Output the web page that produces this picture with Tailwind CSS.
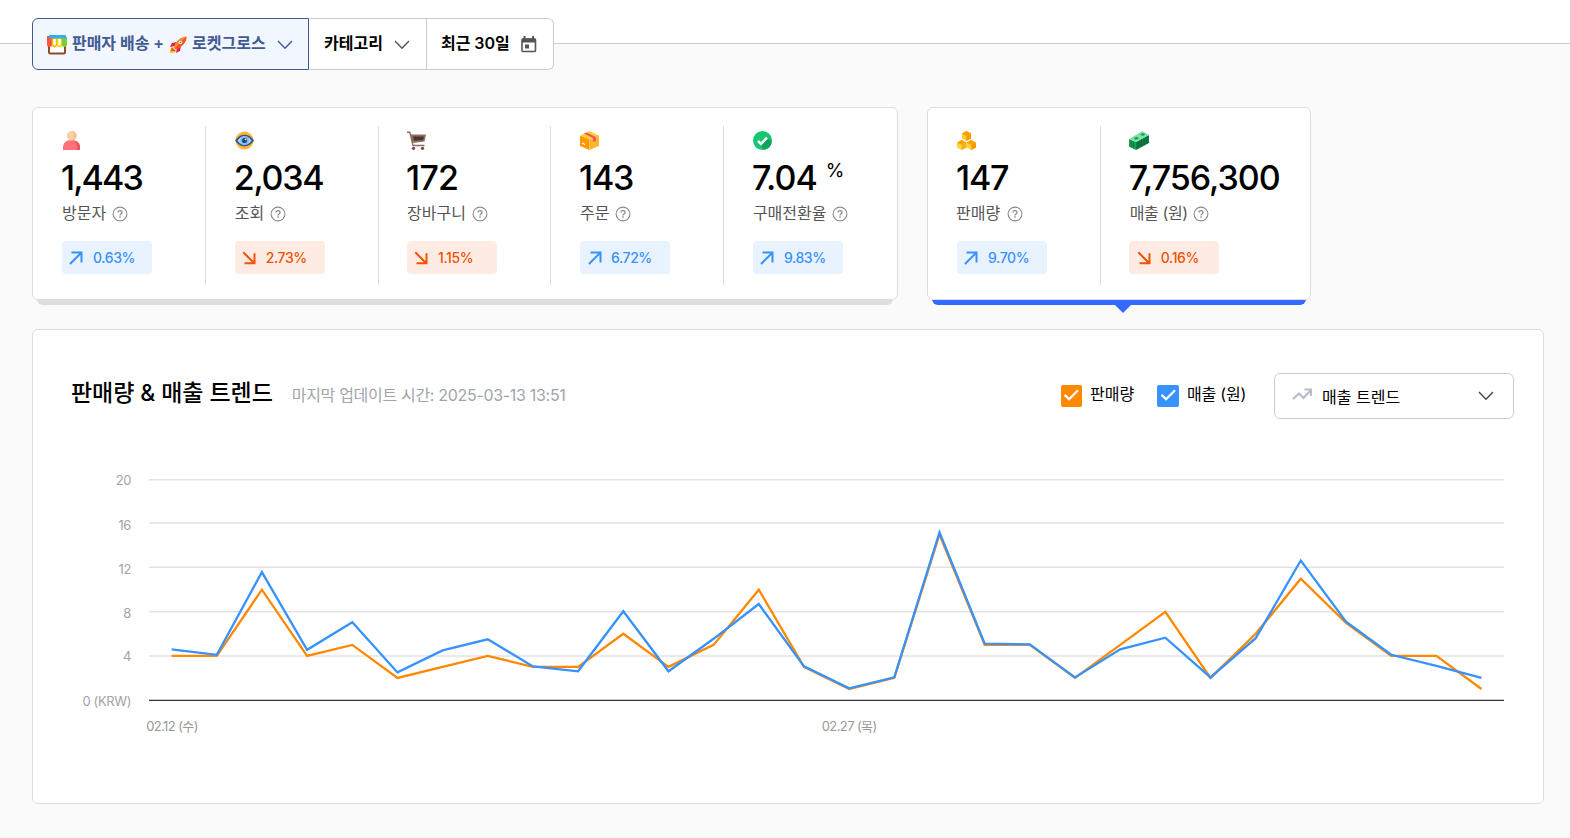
<!DOCTYPE html>
<html lang="ko">
    <head>
        <meta charset="UTF-8"/>
        <meta name="viewport" content="width=device-width, initial-scale=1"/>
        <title>판매 분석</title>
        <script src="https://cdn.jsdelivr.net/npm/@tailwindcss/browser@4"></script>
    </head>
    <body class="bg-[#fafafa] text-black font-['Inter','Noto_Sans_CJK_KR',sans-serif] h-[838px] overflow-hidden">
        <!-- Shared icons -->
        <svg class="hidden">
            <symbol id="chevron" viewBox="0 0 16 10">
                <path d="M1 1l7 7.2L15 1" fill="none" stroke="currentColor" stroke-width="1.4"/>
            </symbol>
            <symbol id="help" viewBox="0 0 16 16">
                <circle cx="8" cy="8" r="6.9" fill="none" stroke="#8c8c8c" stroke-width="1.1"/>
                <path d="M6 6.6C6 5.4 6.8 4.7 8 4.7s2 .7 2 1.8c0 1.4-2 1.5-2 3" fill="none" stroke="#8c8c8c" stroke-width="1.3"/>
                <rect x="7.3" y="10.3" width="1.4" height="1.5" fill="#8c8c8c"/>
            </symbol>
            <symbol id="up" viewBox="0 0 14 14">
                <path d="M1 13L12 2M2.5 1.5h10v10" fill="none" stroke="currentColor" stroke-width="2"/>
            </symbol>
            <symbol id="down" viewBox="0 0 14 14">
                <path d="M1.3 1.3L12 12M2.5 12.2h10v-10" fill="none" stroke="currentColor" stroke-width="2"/>
            </symbol>
        </svg>

        <!-- Filter bar -->
        <header class="h-11 bg-white border-b border-[#ccc] pl-8 pt-[18px]">
            <div class="relative flex w-[522px] h-[52px] bg-white rounded-md text-base font-semibold">
                <button class="flex items-center w-[277px] pl-[14px] border border-[#425a92] rounded-l-md bg-[#f1f6ff] text-[#425a92] whitespace-nowrap">
                    <svg class="w-5 h-5 mt-px mr-[5px]" viewBox="0 0 20 20">
                        <path d="M2 10v7Q2 18.500 3.500 18.500h13q1.500 0 1.500-1.500v-7" fill="#fff" stroke="#8d4b25" stroke-width="2"/>
                        <path d="M0 1h5v8.500a2.500 2.500 0 01-5 0z" fill="#ff5436"/>
                        <path d="M5.500 3v6.500a2 2 0 004 0V3z" fill="#fff" stroke="#ffb300" stroke-width="1.500"/>
                        <path d="M10.500 3v6.500a2 2 0 004 0V3z" fill="#fff" stroke="#f0d400" stroke-width="1.500"/>
                        <path d="M15 2h5v7.500a2.500 2.500 0 01-5 0z" fill="#7ccc35"/>
                        <path d="M2 0h16.500L20 3.500H2z" fill="#2cb2e8"/>
                    </svg>
                    <span class="-mt-0.5 tracking-[-0.05px]">판매자 배송 +</span>
                    <svg class="w-[18px] h-[18px] mt-px ml-[5px] mr-[5px]" viewBox="0 0 18 18">
                        <path d="M1 17l1-6 5 5z" fill="#ffb300"/>
                        <path d="M2 15l1-4 4 4z" fill="#f4511e"/>
                        <path d="M8 6L3 7 1 11l5-1zM12 10l-1 5-4 2 1-5z" fill="#e01e4f"/>
                        <path d="M17.500.5C12 .5 8 4 4.500 11L7 13.500C14 10 17.500 6 17.500.5z" fill="#ff8a1e"/>
                        <path d="M17.500.5C17.500 6 14 10 7 13.500L5.800 12.200z" fill="#f4511e"/>
                        <circle cx="11.500" cy="6.500" r="1.800" fill="#fff"/>
                        <circle cx="11.500" cy="6.500" r="1.100" fill="#38a8ed"/>
                    </svg>
                    <span class="-mt-0.5">로켓그로스</span>
                    <svg class="w-4 h-[10px] ml-[11px] mt-0.5"><use href="#chevron"/></svg>
                </button>
                <button class="flex items-center w-[118px] pl-[15px] border-y border-r border-[#ccc] whitespace-nowrap">
                    <span class="-mt-0.5">카테고리</span>
                    <svg class="w-4 h-[10px] ml-[11px] mt-0.5 text-[#555]"><use href="#chevron"/></svg>
                </button>
                <button class="flex items-center w-[127px] pl-[14px] border-y border-r border-[#ccc] rounded-r-md whitespace-nowrap">
                    <span class="-mt-0.5 tracking-[-0.05px]">최근 30일</span>
                    <svg class="w-4 h-[17px] ml-[11px]" viewBox="0 0 16 17">
                        <path d="M3.500 0v3M12 0v3" stroke="#555" stroke-width="2"/>
                        <rect x="1" y="3" width="13.500" height="12.500" rx="1" fill="none" stroke="#555" stroke-width="1.600"/>
                        <path d="M1 2.500h13.500v4H1z" fill="#555"/>
                        <rect x="4" y="8.500" width="4" height="4" fill="#555"/>
                    </svg>
                </button>
            </div>
        </header>

        <main class="pl-8 pt-[63px]">
            <!-- Metric cards -->
            <section class="flex gap-[29px]">
                <div class="relative">
                    <div class="absolute left-[5px] right-[5px] bottom-[-5px] h-3 bg-[#ddd] rounded-b-md"></div>
                    <div class="relative flex w-[866px] h-[193px] pt-[18px] bg-white border border-[#ddd] rounded-md">
                        <div class="w-[172.800px] h-[159px] pl-[29px] pt-[5px] border-r border-[#ddd]">
                            <svg class="w-[19px] h-[19px]" viewBox="0 0 19 19">
                                <path d="M1 19v-2.500C1 12 4 9 9.500 9S18 12 18 16.500V19z" fill="#ff7078"/>
                                <path d="M12 9.400c4 .8 6 3.400 6 7.100V19h-3v-3c0-3-1-5-3-6.600z" fill="#ee525d"/>
                                <circle cx="9.500" cy="4.700" r="4.700" fill="#ffd0a1"/>
                                <path d="M10 0a4.700 4.700 0 010 9.400c2.500-3 2.500-6.500 0-9.400z" fill="#ffbd86"/>
                            </svg>
                            <div class="-ml-px mt-2 text-[34px] leading-10 font-medium tracking-[-1.9px]">1,443</div>
                            <div class="mt-1 flex items-center h-[22px] text-base text-[#555]"><span>방문자</span><svg class="w-4 h-4 ml-1.5 mt-0.5"><use href="#help"/></svg></div>
                            <div class="mt-[17px] flex items-center w-[90px] h-[33px] pl-[7px] rounded bg-[#e8f3ff] text-sm font-medium text-[#3990ff] tracking-[-0.4px]"><svg class="w-3.5 h-3.5 mr-2.5"><use href="#up"/></svg>0.63%</div>
                        </div>
                        <div class="w-[172.800px] h-[159px] pl-[29px] pt-[5px] border-r border-[#ddd]">
                            <svg class="w-[19px] h-[19px]" viewBox="0 0 19 19">
                                <circle cx="9.500" cy="9.500" r="9" fill="#ffb52e"/>
                                <path d="M0 9.500C4 4.500 6.500 3.800 9.500 3.800S15 4.500 19 9.500c-4 5-6.500 5.700-9.500 5.700S4 14.500 0 9.500z" fill="#36528b"/>
                                <path d="M2.500 9.500C5 6 7 5.200 9.500 5.200S14 6 16.500 9.500C14 13 12 13.800 9.500 13.800S5 13 2.500 9.500z" fill="#b8dcff"/>
                                <circle cx="9.500" cy="9.500" r="4.600" fill="#7fbdf5"/>
                                <circle cx="9.500" cy="9.500" r="2.500" fill="#253f76"/>
                                <circle cx="10.500" cy="8.500" r=".8" fill="#fff"/>
                            </svg>
                            <div class="-ml-px mt-2 text-[34px] leading-10 font-medium tracking-[-1.3px]">2,034</div>
                            <div class="mt-1 flex items-center h-[22px] text-base text-[#555]"><span>조회</span><svg class="w-4 h-4 ml-1.5 mt-0.5"><use href="#help"/></svg></div>
                            <div class="mt-[17px] flex items-center w-[90px] h-[33px] pl-[7px] rounded bg-[#feece4] text-sm font-medium text-[#f25100] tracking-[-0.4px]"><svg class="w-3.5 h-3.5 mr-2.5"><use href="#down"/></svg>2.73%</div>
                        </div>
                        <div class="w-[172.800px] h-[159px] pl-[28.500px] pt-[5px] border-r border-[#ddd]">
                            <svg class="w-[19px] h-[19px]" viewBox="0 0 19 19">
                                <path d="M0 1.200h2.800L6 14.500h11.500" fill="none" stroke="#8d6e63" stroke-width="1.400"/>
                                <path d="M3.600 3.500H19l-1.500 7L5.300 12z" fill="#8d6e63"/>
                                <path d="M6 5.500h11l-.8 3.600-9.200.6z" fill="#4e342e"/>
                                <circle cx="6.500" cy="17.300" r="1.600" fill="#6d4c41"/>
                                <circle cx="15.500" cy="17.300" r="1.600" fill="#6d4c41"/>
                            </svg>
                            <div class="-ml-px mt-2 text-[34px] leading-10 font-medium tracking-[-0.8px]">172</div>
                            <div class="mt-1 flex items-center h-[22px] text-base text-[#555]"><span>장바구니</span><svg class="w-4 h-4 ml-1.5 mt-0.5"><use href="#help"/></svg></div>
                            <div class="mt-[17px] flex items-center w-[90px] h-[33px] pl-[7px] rounded bg-[#feece4] text-sm font-medium text-[#f25100] tracking-[-0.4px]"><svg class="w-3.5 h-3.5 mr-2.5"><use href="#down"/></svg>1.15%</div>
                        </div>
                        <div class="w-[172.800px] h-[159px] pl-[28.600px] pt-[5px] border-r border-[#ddd]">
                            <svg class="w-[19px] h-[19px]" viewBox="0 0 19 19">
                                <path d="M0 4.500L9.500 8v11L0 15z" fill="#ff9800"/>
                                <path d="M19 4.500L9.500 8v11l9.500-4z" fill="#ffb62e"/>
                                <path d="M0 4.500L9.500 0 19 4.500 9.500 8.500z" fill="#ffd13f"/>
                                <path d="M4 2.600L6.500 1.400 16 5.900V10l-2.700 1V7.200z" fill="#f3535c"/>
                                <path d="M2 12l3 1.500" stroke="#fff" stroke-width="1.200"/>
                            </svg>
                            <div class="-ml-px mt-2 text-[34px] leading-10 font-medium tracking-[-1.2px]">143</div>
                            <div class="mt-1 flex items-center h-[22px] text-base text-[#555]"><span>주문</span><svg class="w-4 h-4 ml-1.5 mt-0.5"><use href="#help"/></svg></div>
                            <div class="mt-[17px] flex items-center w-[90px] h-[33px] pl-2 rounded bg-[#e8f3ff] text-sm font-medium text-[#3990ff] tracking-[-0.4px]"><svg class="w-3.5 h-3.5 mr-[9px]"><use href="#up"/></svg>6.72%</div>
                        </div>
                        <div class="w-[172.800px] h-[159px] pl-[28.700px] pt-[5px]">
                            <svg class="w-[19px] h-[19px]" viewBox="0 0 19 19">
                                <circle cx="9.500" cy="9.500" r="9.500" fill="#17c671"/>
                                <path d="M14.500 6.500l4.200 4.200a9.500 9.500 0 01-7.500 8L6 12.500z" fill="#10a35b"/>
                                <path d="M5 9.800l3 3L14 6.700" fill="none" stroke="#fff" stroke-width="2.600"/>
                            </svg>
                            <div class="-ml-px flex mt-2 text-[34px] leading-10 font-medium tracking-[-1px]">7.04<span class="ml-[9px] text-[19px] leading-[26px] font-normal">%</span></div>
                            <div class="mt-1 flex items-center h-[22px] text-base text-[#555]"><span>구매전환율</span><svg class="w-4 h-4 ml-1.5 mt-0.5"><use href="#help"/></svg></div>
                            <div class="mt-[17px] flex items-center w-[90px] h-[33px] pl-[7px] rounded bg-[#e8f3ff] text-sm font-medium text-[#3990ff] tracking-[-0.4px]"><svg class="w-3.5 h-3.5 mr-2.5"><use href="#up"/></svg>9.83%</div>
                        </div>
                    </div>
                </div>

                <!-- Selected group -->
                <div class="relative">
                    <div class="absolute left-[5px] right-[5px] bottom-[-5px] h-3 bg-[#346aff] rounded-b-md"></div>
                    <svg class="absolute left-[188px] bottom-[-13px] w-4 h-2" viewBox="0 0 16 8"><path d="M0 0h16L8 8z" fill="#346aff"/></svg>
                    <div class="relative flex w-[384px] h-[193px] pt-[18px] bg-white border border-[#ddd] rounded-md">
                        <div class="w-[172.800px] h-[159px] pl-[29px] pt-[5px] border-r border-[#ddd]">
                            <svg class="w-[19px] h-[19px]" viewBox="0 0 19 19">
                                <path d="M5 2.500L9.500 0 14 2.500v5L9.500 10 5 7.500z" fill="#ffc928"/>
                                <path d="M5 2.500L9.500 0 14 2.500 9.500 5z" fill="#ffa000"/>
                                <path d="M9.500 5L14 2.500v5L9.500 10z" fill="#ff9800"/>
                                <path d="M0 11.500L4.700 9l4.800 2.500v5L4.700 19 0 16.500z" fill="#ffd43b"/>
                                <path d="M0 11.500L4.700 9l4.800 2.500L4.700 14z" fill="#ffa000"/>
                                <path d="M4.700 14l4.800-2.500v5L4.700 19z" fill="#ffad15"/>
                                <path d="M9.500 11.500L14.200 9l4.800 2.500v5L14.200 19l-4.700-2.500z" fill="#ffd43b"/>
                                <path d="M9.500 11.500L14.200 9l4.800 2.500-4.800 2.500z" fill="#ffa000"/>
                                <path d="M14.200 14l4.800-2.500v5L14.200 19z" fill="#ff9800"/>
                            </svg>
                            <div class="-ml-px mt-2 text-[34px] leading-10 font-medium tracking-[-1.2px]">147</div>
                            <div class="mt-1 flex items-center h-[22px] text-base text-[#555]"><span class="-ml-px">판매량</span><svg class="w-4 h-4 ml-[7px] mt-0.5"><use href="#help"/></svg></div>
                            <div class="mt-[17px] flex items-center w-[90px] h-[33px] pl-[7px] rounded bg-[#e8f3ff] text-sm font-medium text-[#3990ff] tracking-[-0.4px]"><svg class="w-3.5 h-3.5 mr-2.5"><use href="#up"/></svg>9.70%</div>
                        </div>
                        <div class="h-[159px] pl-[28px] pt-[5px]">
                            <svg class="w-5 h-[19px]" viewBox="0 0 20 19">
                                <path d="M0 8l7 3v8l-7-3.500z" fill="#17a055"/>
                                <path d="M7 11l13-7v8L7 19z" fill="#0b7a44"/>
                                <path d="M0 8l13.500-8L20 4 7 11z" fill="#7fe0a6"/>
                                <path d="M4.500 7.300l3-1.500 2.500 1.400-3 1.500zM11 3.600l3-1.500 2.500 1.400-3 1.500z" fill="#0fa35c"/>
                                <path d="M2.200 9.500v7.200M4.600 10.500v7.200M9.700 10v7.300M12.500 8.500v7.300M15.200 7v7.300M17.800 5.500v7.300" stroke="#096338" stroke-width=".8"/>
                            </svg>
                            <div class="mt-2 text-[34px] leading-10 font-medium tracking-[-1px]">7,756,300</div>
                            <div class="mt-1 flex items-center h-[22px] text-base text-[#555] tracking-[-0.4px]"><span class="ml-px">매출 (원)</span><svg class="w-4 h-4 ml-[5px] mt-0.5"><use href="#help"/></svg></div>
                            <div class="mt-[17px] flex items-center w-[90px] h-[33px] pl-2 rounded bg-[#feece4] text-sm font-medium text-[#f25100] tracking-[-0.4px]"><svg class="w-3.5 h-3.5 mr-2.5"><use href="#down"/></svg>0.16%</div>
                        </div>
                    </div>
                </div>
            </section>

            <!-- Trend panel -->
            <section class="mt-[29px] w-[1512px] h-[475px] bg-white border border-[#ddd] rounded-md">
                <div class="flex items-center mt-[43px] h-[46px] pl-[38px] pr-[29px] whitespace-nowrap">
                    <h2 class="text-[23px] leading-8 font-medium -mt-1.5 tracking-[-0.08px]">판매량 &amp; 매출 트렌드</h2>
                    <span class="ml-[19px] -mt-0.5 text-base text-[#a0a5ab] tracking-[-0.31px]">마지막 업데이트 시간: 2025-03-13 13:51</span>
                    <div class="ml-auto flex items-center text-base">
                        <label class="flex items-center w-24">
                            <svg class="w-[21px] h-[22px] mr-2" viewBox="0 0 21 22"><rect width="21" height="22" rx="2" fill="#ff8800"/><path d="M3.500 9.800l4.600 4.400L17 5.300" fill="none" stroke="#fff" stroke-width="2.300"/></svg>
                            <span class="-mt-1">판매량</span>
                        </label>
                        <label class="flex items-center w-[117px]">
                            <svg class="w-[22px] h-[22px] mr-2" viewBox="0 0 22 22"><rect width="22" height="22" rx="2" fill="#3692ff"/><path d="M4.500 9.800l4.600 4.400L18 5.300" fill="none" stroke="#fff" stroke-width="2.300"/></svg>
                            <span class="-mt-1 tracking-[-0.2px]">매출 (원)</span>
                        </label>
                        <button class="flex items-center w-60 h-[46px] pl-[17px] pr-[19px] border border-[#ccc] rounded-md">
                            <svg class="w-5 h-3 -mt-1 mr-[10px]" viewBox="0 0 20 12"><path d="M1 11l6-5.500 4.500 4.500L18 3M12.500 1.500H19V8" fill="none" stroke="#b5bfc9" stroke-width="2.200"/></svg>
                            <span class="mt-0.5">매출 트렌드</span>
                            <svg class="w-4 h-[10px] ml-auto text-[#444]"><use href="#chevron"/></svg>
                        </button>
                    </div>
                </div>
                <svg class="block w-[1510px] h-[384px]" viewBox="33 419 1510 384">
                    <path d="M149 479.700H1504M149 523H1504M149 567.300H1504M149 611.700H1504M149 656H1504" stroke="#e3e3e3" stroke-width="1.500"/>
                    <path d="M149 700.300H1504" stroke="#333" stroke-width="1.300"/>
                    <g class="text-[13px] fill-[#a3a3a3] font-normal tracking-[-0.4px]" text-anchor="end">
                        <text x="131" y="485.300">20</text>
                        <text x="131" y="529.500">16</text>
                        <text x="131" y="574">12</text>
                        <text x="131" y="618.300">8</text>
                        <text x="131" y="661">4</text>
                        <text x="131" y="706">0 (KRW)</text>
                    </g>
                    <g class="text-[13px] fill-[#999] font-normal tracking-[-0.6px]" text-anchor="middle">
                        <text x="172" y="731">02.12 (수)</text>
                        <text x="849.200" y="731">02.27 (목)</text>
                    </g>
                    <polyline id="salesLine" fill="none" stroke="#ff8800" stroke-width="2.300"/>
                    <polyline id="revenueLine" fill="none" stroke="#3692ff" stroke-width="2.300"/>
                </svg>
            </section>
        </main>

        <script>
            const sales = [4, 4, 10, 4, 5, 2, 3, 4, 3, 3, 6, 3, 5, 10, 3, 1, 2, 15, 5, 5, 2, 5, 8, 2, 6, 11, 7, 4, 4, 1];
            const revenue = [4.6, 4.1, 11.6, 4.55, 7.05, 2.5, 4.5, 5.5, 3.05, 2.6, 8.05, 2.6, 5.55, 8.7, 3.05, 1.05, 2.05, 15.2, 5.1, 5.05, 2.05, 4.6, 5.65, 2.05, 5.6, 12.65, 7.1, 4.1, 3.1, 2];

            function drawLine(id, values) {
                const points = values.map((v, i) => (171.6 + i * 45.17).toFixed(1) + "," + (700 - v * 11.03).toFixed(1));
                document.getElementById(id).setAttribute("points", points.join(" "));
            }

            drawLine("salesLine", sales);
            drawLine("revenueLine", revenue);
        </script>
    </body>
</html>
